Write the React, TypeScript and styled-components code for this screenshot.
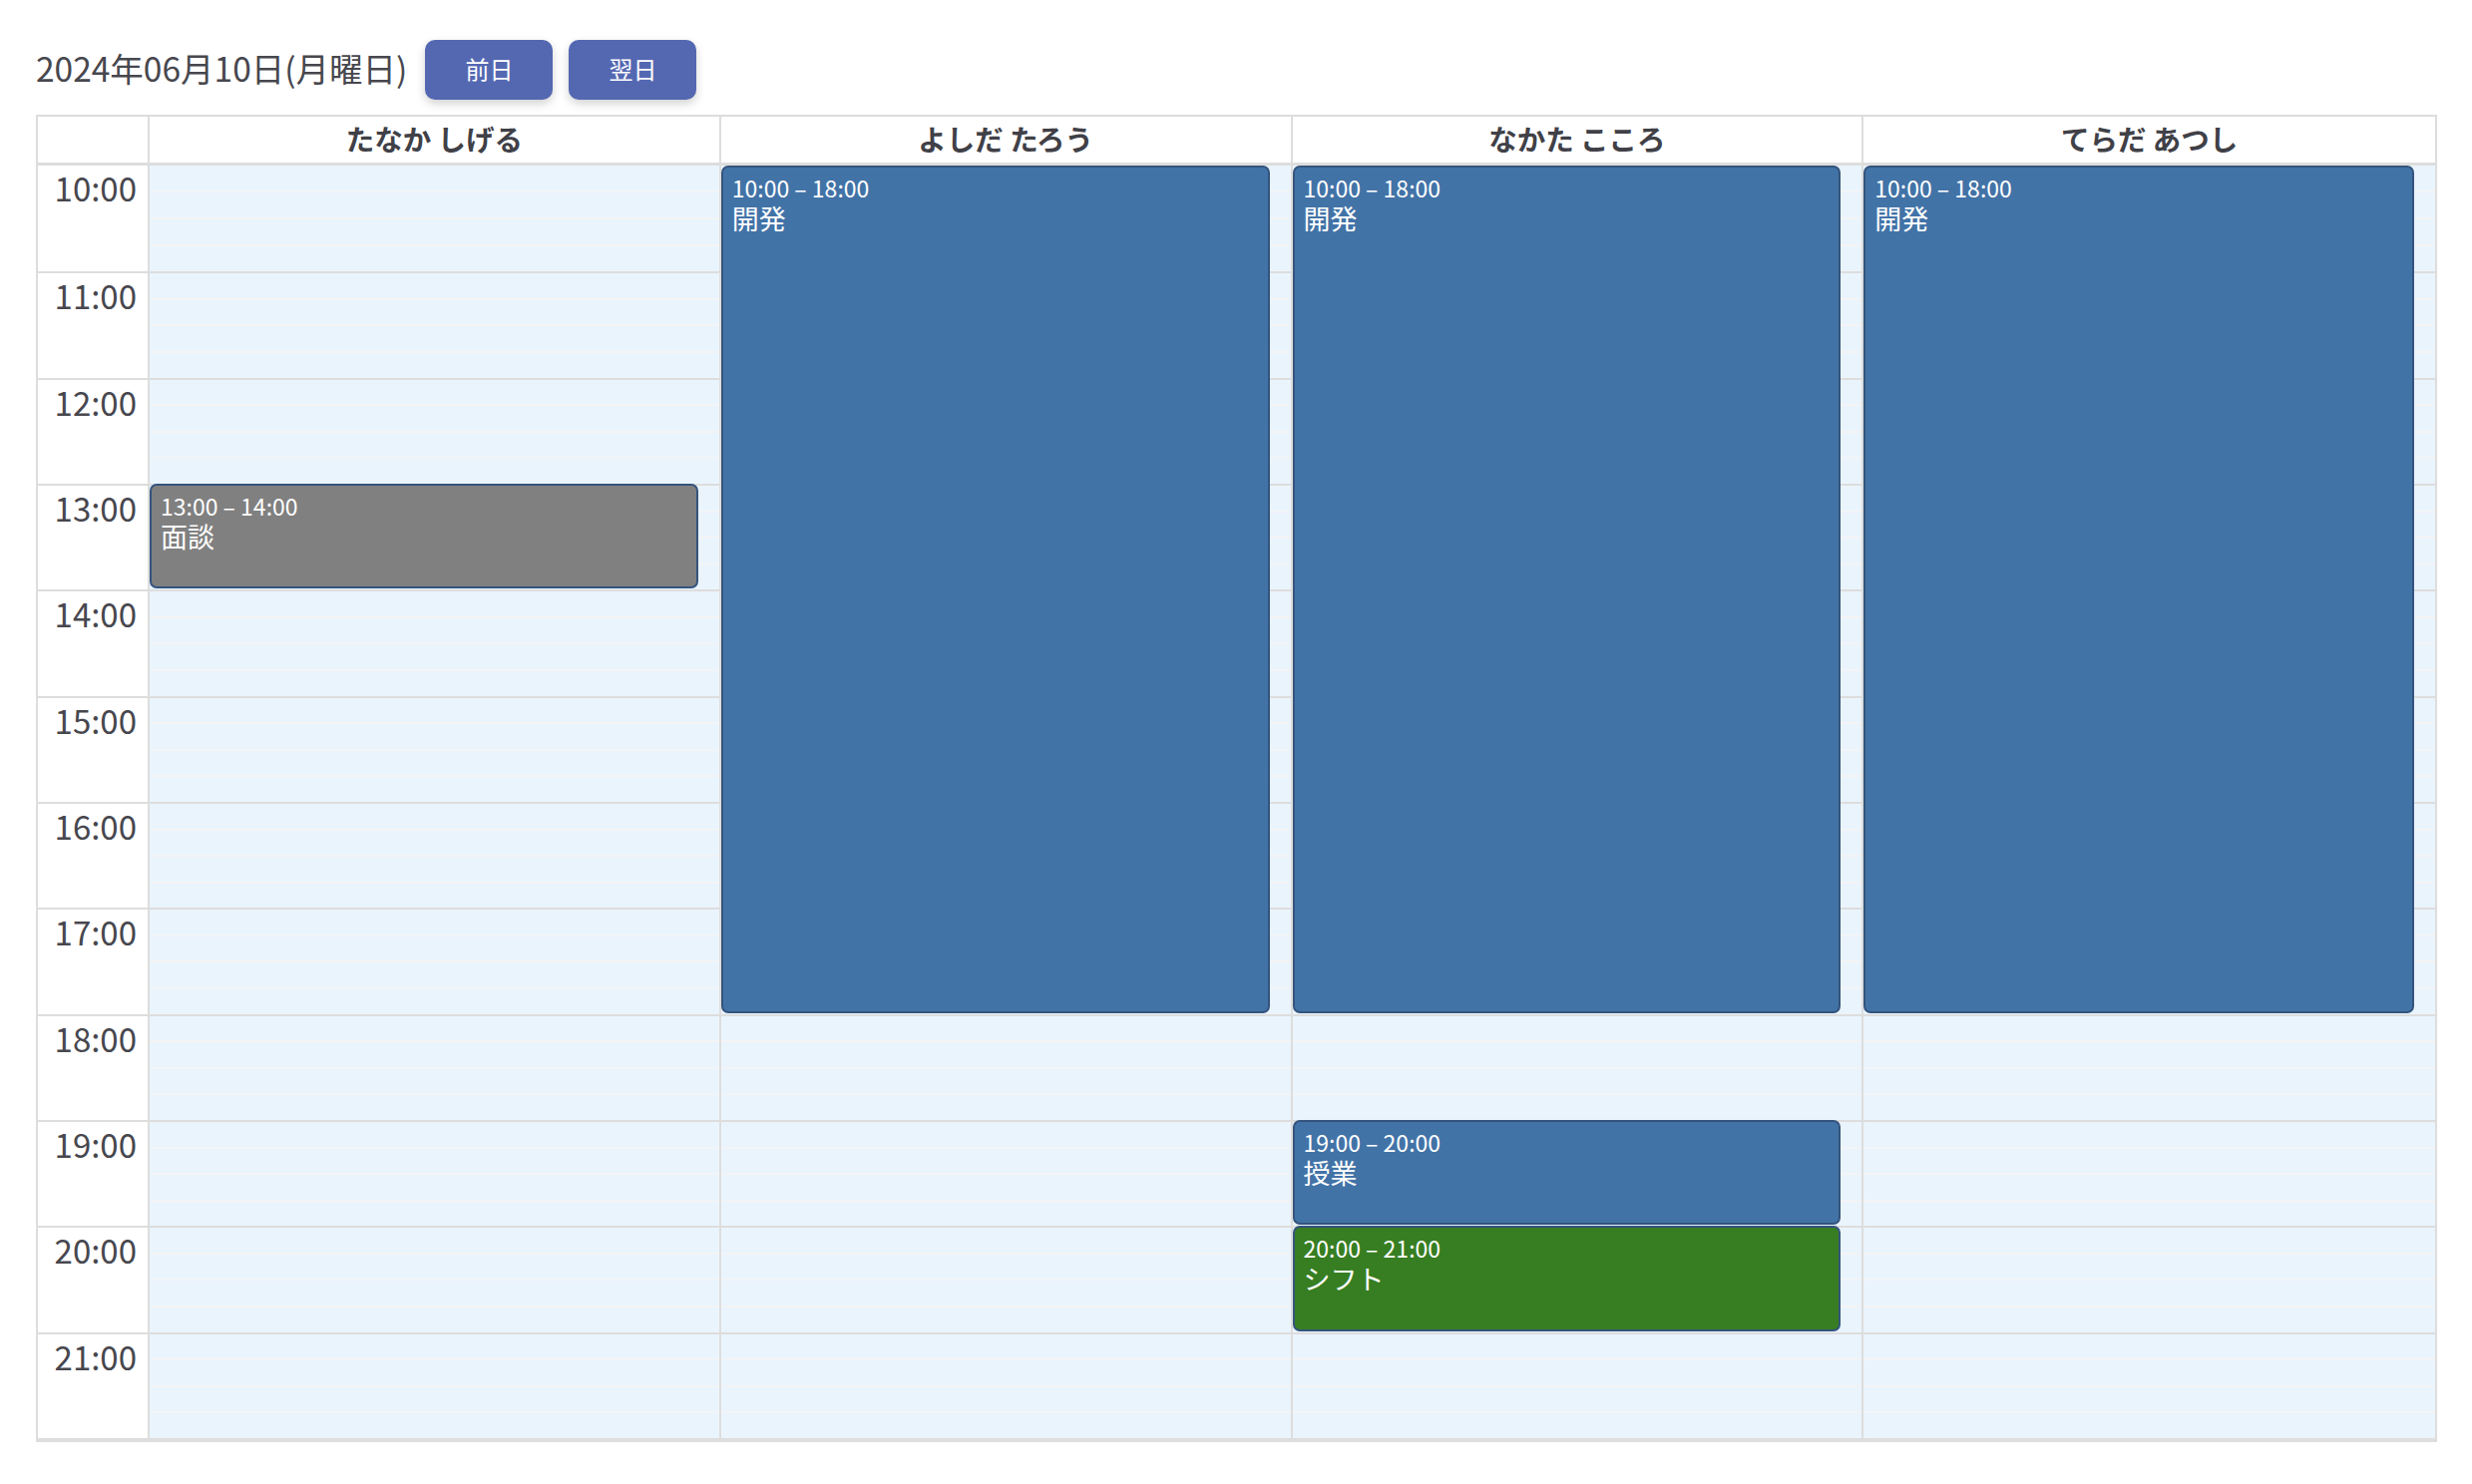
import styled, { createGlobalStyle } from "styled-components";

const HOUR = 106.33;
const START_HOUR = 10;
const END_HOUR = 22;

interface CalendarEvent {
    resource: number;
    start: number;
    end: number;
    title: string;
    color: string;
}

const resources = ["たなか しげる", "よしだ たろう", "なかた こころ", "てらだ あつし"];

const events: CalendarEvent[] = [
    { resource: 0, start: 13, end: 14, title: "面談", color: "#808080" },
    { resource: 1, start: 10, end: 18, title: "開発", color: "#4273a7" },
    { resource: 2, start: 10, end: 18, title: "開発", color: "#4273a7" },
    { resource: 2, start: 19, end: 20, title: "授業", color: "#4273a7" },
    { resource: 2, start: 20, end: 21, title: "シフト", color: "#377e22" },
    { resource: 3, start: 10, end: 18, title: "開発", color: "#4273a7" },
];

const hours = Array.from({ length: END_HOUR - START_HOUR }, (_, i) => START_HOUR + i);

const fmt = (h: number) => `${h}:00`;

const App = () => {
    return (
        <>
            <GlobalStyle />
            <Page>
                <Toolbar>
                    <DateLabel>2024年06月10日(月曜日)</DateLabel>
                    <ButtonGroup>
                        <NavButton>前日</NavButton>
                        <NavButton>翌日</NavButton>
                    </ButtonGroup>
                </Toolbar>
                <Calendar>
                    <HeaderRow>
                        <HeaderCell />
                        {resources.map((name) => (
                            <HeaderCell key={name}>{name}</HeaderCell>
                        ))}
                    </HeaderRow>
                    <Body>
                        <TimeColumn>
                            {hours.map((h) => (
                                <TimeCell key={h}>{fmt(h)}</TimeCell>
                            ))}
                        </TimeColumn>
                        {resources.map((name, idx) => (
                            <ResourceColumn key={name}>
                                {hours.map((h) => (
                                    <HourSlot key={h}>
                                        <Quarter />
                                        <Quarter />
                                        <Quarter />
                                        <Quarter />
                                    </HourSlot>
                                ))}
                                {events
                                    .filter((e) => e.resource === idx)
                                    .map((e) => (
                                        <EventBox
                                            key={`${e.start}-${e.title}`}
                                            $color={e.color}
                                            style={{
                                                top: (e.start - START_HOUR) * HOUR,
                                                height: (e.end - e.start) * HOUR - 1,
                                            }}
                                        >
                                            <EventTime>
                                                {fmt(e.start)} – {fmt(e.end)}
                                            </EventTime>
                                            <EventTitle>{e.title}</EventTitle>
                                        </EventBox>
                                    ))}
                            </ResourceColumn>
                        ))}
                    </Body>
                </Calendar>
            </Page>
        </>
    );
};

export default App;

const GlobalStyle = createGlobalStyle`
    body {
        margin: 0;
        background: #ffffff;
        font-family: "Noto Sans CJK JP", "Noto Sans", sans-serif;
        color: #444448;
    }
`;

const Page = styled.div`
    padding: 40px 35px 40px 36px;
`;

const Toolbar = styled.div`
    display: flex;
    align-items: center;
    margin-bottom: 15px;
`;

const DateLabel = styled.div`
    font-size: 33.5px;
    color: #47474e;
    margin-bottom: 5px;
`;

const ButtonGroup = styled.div`
    display: flex;
    gap: 16px;
    margin-left: 18px;
`;

const NavButton = styled.button`
    width: 128px;
    height: 60px;
    border: none;
    border-radius: 10px;
    background-color: #5468b2;
    color: #ffffff;
    font-family: inherit;
    font-size: 24px;
    padding: 0 0 3px;
    box-shadow: 0 4px 10px rgba(0, 0, 0, 0.18);
    cursor: pointer;
`;

const Calendar = styled.div`
    border: 2px solid #dddddd;
    border-bottom-width: 4px;
`;

const HeaderRow = styled.div`
    display: grid;
    grid-template-columns: 112px repeat(4, 1fr);
    height: 49px;
    border-bottom: 3px solid #dddddd;
    box-sizing: border-box;
`;

const HeaderCell = styled.div`
    display: flex;
    align-items: center;
    justify-content: center;
    padding-bottom: 4px;
    border-right: 2px solid #dddddd;
    font-size: 28.5px;
    font-weight: 700;
    color: #404047;

    &:last-child {
        border-right: none;
    }
`;

const Body = styled.div`
    display: grid;
    grid-template-columns: 112px repeat(4, 1fr);
`;

const TimeColumn = styled.div`
    border-right: 2px solid #dddddd;
    background: #ffffff;
`;

const TimeCell = styled.div`
    height: ${HOUR}px;
    box-sizing: border-box;
    border-top: 2px solid #dddddd;
    padding: 3px 11px 0 0;
    text-align: right;
    font-size: 33px;
    line-height: 38px;
    color: #47474e;

    &:first-child {
        border-top: none;
    }
`;

const ResourceColumn = styled.div`
    position: relative;
    background: #eaf4fd;
    border-right: 2px solid #dddddd;

    &:last-child {
        border-right: none;
    }
`;

const HourSlot = styled.div`
    height: ${HOUR}px;
    box-sizing: border-box;
    border-top: 2px solid #dddddd;
    display: flex;
    flex-direction: column;

    &:first-child {
        border-top: none;
    }
`;

const Quarter = styled.div`
    flex: 1;
    border-top: 2px solid #f3f4f5;

    &:first-child {
        border-top: none;
    }
`;

const EventBox = styled.div<{ $color: string }>`
    position: absolute;
    left: 0;
    right: 21px;
    box-sizing: border-box;
    background-color: ${({ $color }) => $color};
    border: 2px solid #34547d;
    border-radius: 7px;
    padding: 6px 9px;
    color: #ffffff;
    overflow: hidden;
`;

const EventTime = styled.div`
    font-size: 23px;
    line-height: 28px;
`;

const EventTitle = styled.div`
    font-size: 27px;
    line-height: 34px;
`;
